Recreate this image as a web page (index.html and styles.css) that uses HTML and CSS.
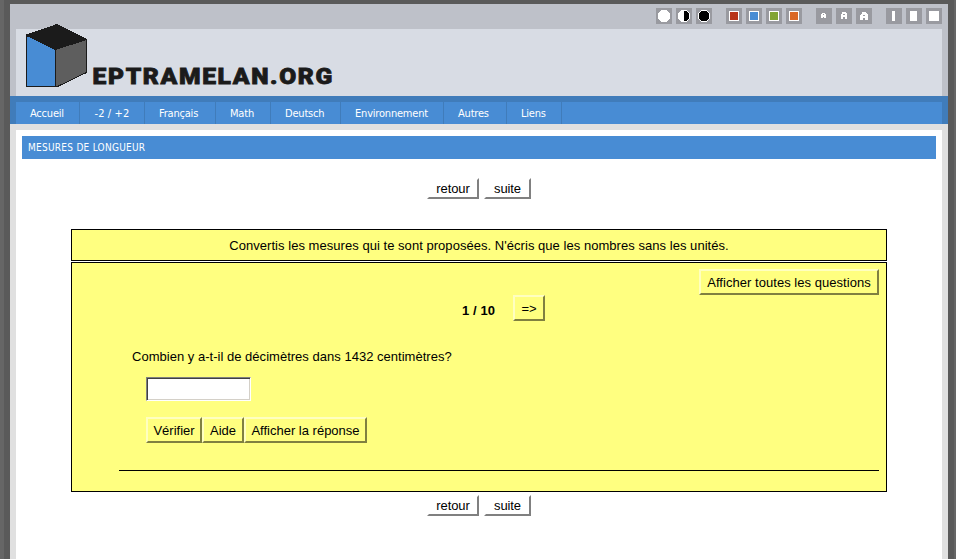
FILE: index.html
```html
<!DOCTYPE html>
<html lang="fr">
<head>
<meta charset="utf-8">
<title>Mesures de longueur</title>
<link rel="stylesheet" href="styles.css">
</head>
<body>
<div class="page">
  <header class="header">
    <div class="tools">
      <div class="group">
        <svg class="tool" viewBox="0 0 16 16"><path fill="#fff" d="M5 2h6v1h1v1h1v1h1v6h-1v1h-1v1h-1v1H5v-1H4v-1H3v-1H2V5h1V4h1V3h1z"/></svg>
        <svg class="tool" viewBox="0 0 16 16"><path fill="#fff" d="M5 2h6v1h1v1h1v1h1v6h-1v1h-1v1h-1v1H5v-1H4v-1H3v-1H2V5h1V4h1V3h1z"/><path d="M8 3h3v1h1v1h1v6h-1v1h-1v1H8z"/></svg>
        <svg class="tool" viewBox="0 0 16 16"><path fill="#fff" d="M5 2h6v1h1v1h1v1h1v6h-1v1h-1v1h-1v1H5v-1H4v-1H3v-1H2V5h1V4h1V3h1z"/><path d="M5 3h6v1h1v1h1v6h-1v1h-1v1H5v-1H4v-1H3V5h1V4h1z"/></svg>
      </div>
      <div class="group">
        <span class="tool"><i class="swatch red"></i></span>
        <span class="tool"><i class="swatch blue"></i></span>
        <span class="tool"><i class="swatch green"></i></span>
        <span class="tool"><i class="swatch orange"></i></span>
      </div>
      <div class="group">
        <svg class="tool" viewBox="0 0 16 16"><path fill="#fff" fill-rule="evenodd" d="M6 5h3v1h1v4H8V9H7v1H5V6h1zM7 6h1v1H7z"/></svg>
        <svg class="tool" viewBox="0 0 16 16"><path fill="#fff" fill-rule="evenodd" d="M6 4h4v1h1v6H9V9H7v2H5V6h1zM7 6h2v1H7z"/></svg>
        <svg class="tool" viewBox="0 0 16 16"><path fill="#fff" fill-rule="evenodd" d="M6 4h4v1h1v1h1v6H9v-2H7v2H4V7h1V6h1zM7 7h2v1H7z"/></svg>
      </div>
      <div class="group">
        <span class="tool"><i class="bar narrow"></i></span>
        <span class="tool"><i class="bar medium"></i></span>
        <span class="tool"><i class="bar wide"></i></span>
      </div>
    </div>
    <div class="banner">
      <svg class="logo" width="330" height="67" viewBox="16 29 330 67">
        <g shape-rendering="crispEdges" stroke="#1b1b1b" stroke-width="1" stroke-linejoin="bevel">
          <path fill="#488cd4" d="M26.5 35.5L55.5 49.5V86.5H26.5z"/>
          <path fill="#5e5e5e" d="M55.5 49.5L86.5 39.5V72.5L57.5 86.5H55.5z"/>
          <path fill="#1b1b1b" d="M26.5 35L57 24.5L86.5 39.5L55.5 49.5z"/>
        </g>
        <text class="brand" transform="translate(92.6 84) scale(1.12 1)" textLength="214" lengthAdjust="spacing">EPTRAMELAN.ORG</text>
      </svg>
    </div>
  </header>
  <nav class="nav">
    <a class="w1">Accueil</a><a class="w2">-2 / +2</a><a class="w3">Français</a><a class="w4">Math</a><a class="w5">Deutsch</a><a class="w6">Environnement</a><a class="w7">Autres</a><a class="w8">Liens</a>
  </nav>
  <main class="content">
    <h1 class="title">MESURES DE LONGUEUR</h1>
    <div class="pager top"><button class="retour">retour</button><button class="suite">suite</button></div>
    <section class="box intro"><span class="introtext">Convertis les mesures qui te sont proposées. N'écris que les nombres sans les unités.</span></section>
    <section class="box quiz">
      <div class="all"><button class="yb b-all">Afficher toutes les questions</button></div>
      <div class="step"><b class="count">1 / 10</b><button class="yb b-next">=&gt;</button></div>
      <p class="question">Combien y a-t-il de décimètres dans 1432 centimètres?</p>
      <input class="answer" type="text">
      <div class="actions"><button class="yb b-check">Vérifier</button><button class="yb b-help">Aide</button><button class="yb b-show">Afficher la réponse</button></div>
      <div class="rule"></div>
    </section>
    <div class="pager bottom"><button class="retour">retour</button><button class="suite">suite</button></div>
  </main>
</div>
</body>
</html>
```
FILE: styles.css
```css
* { box-sizing: border-box; }
html, body { margin: 0; height: 100%; overflow: hidden; }
body { background: #666; padding: 0 2px 0 4px; font: 13px/16px "Liberation Sans", Arial, sans-serif; color: #000; }
.page { height: 559px; border: solid #5a5a5a; border-width: 4px 6px 0; display: flex; flex-direction: column; }
.header { height: 92px; background: #bec1c9; padding: 4px 6px 0; flex: none; }
.tools { display: flex; justify-content: flex-end; gap: 14px; height: 21px; }
.group { display: flex; gap: 4px; }
.tool { width: 16px; height: 16px; background: #999aa0; display: flex; align-items: center; justify-content: center; shape-rendering: crispEdges; }
.swatch { width: 10px; height: 10px; border: 1px solid #fff; }
.red { background: #b83418; }
.blue { background: #488cd4; }
.green { background: #82a434; }
.orange { background: #da6826; }
.bar { background: #fff; height: 10px; }
.narrow { width: 3px; margin-right: 1px; }
.medium { width: 7px; margin-right: 1px; }
.wide { width: 10px; }
.banner { height: 67px; background: #d8dce4; }
.logo { display: block; overflow: visible; }
.brand { font: 900 22px Roboto, sans-serif; fill: #1b1b1b; stroke: #1b1b1b; stroke-width: .8px; }
.nav { height: 28px; flex: none; background: #488cd4; border: solid #407cba; border-width: 6px 6px 0; display: flex; font: 11px/23px "DejaVu Sans Condensed", "DejaVu Sans", sans-serif; font-stretch: condensed; letter-spacing: -.2px; color: #fff; }
.nav a { border-right: 1px solid #407cba; padding-left: 14px; white-space: nowrap; }
.nav .w2 { letter-spacing: .1px; padding-left: 14.5px; }
.w1 { width: 64px; } .w2 { width: 65px; } .w3 { width: 71px; } .w4 { width: 55px; }
.w5 { width: 70px; } .w6 { width: 103px; } .w7 { width: 63px; } .w8 { width: 55px; }
.content { flex: 1; background: #fff; border: solid #e0e0e0; border-width: 6px 6px 0; padding: 6px 6px 0; }
.title { margin: 0; height: 23px; background: #488cd4; color: #fff; padding-left: 6px; font: 10px/23px "DejaVu Sans Condensed", "DejaVu Sans", sans-serif; font-stretch: condensed; letter-spacing: .27px; }
.pager { display: flex; justify-content: center; gap: 5px; }
.top { margin-top: 19px; }
.bottom { margin-top: 3px; }
button { font: inherit; color: #000; padding: 0; white-space: nowrap; }
.pager button { height: 21px; background: #fff; border: 2px solid; border-color: #fff #808080 #808080 #fff; line-height: 17px; letter-spacing: -.1px; }
.retour { width: 52px; } .suite { width: 47px; }
.box { width: 816px; margin-left: 49px; background: #ffff80; border: 1px solid #000; }
.intro { margin-top: 30px; height: 32px; line-height: 31px; text-align: center; letter-spacing: .04px; }
.quiz { margin-top: 1px; height: 230px; padding: 6px 7px 0 47px; letter-spacing: .02px; }
.all { display: flex; justify-content: flex-end; }
.yb { height: 26px; background: #ffff80; border: 2px solid; border-color: #ffffc0 #808040 #808040 #ffffc0; padding-top: 1px; }
.b-all { width: 180px; letter-spacing: .04px; }
.step { display: flex; align-items: flex-start; padding-left: 343px; }
.count { width: 51px; line-height: 31px; letter-spacing: .1px; }
.b-next { width: 32px; }
.question { margin: 28px 0 12px 13px; height: 16px; }
.step { height: 26px; }
.answer { display: block; width: 105px; height: 24px; margin-left: 27px; background: #fff; border: 1px solid; border-color: #808080 #fff #fff #808080; outline: none; padding: 0; box-shadow: inset 1px 1px #404040, inset -1px -1px #d4d0c8; }
.actions { display: flex; margin: 16px 0 0 27px; }
.b-check { width: 56px; } .b-help { width: 42px; } .b-show { width: 123px; }
.rule { height: 1px; margin-top: 27px; background: #000; }
```
